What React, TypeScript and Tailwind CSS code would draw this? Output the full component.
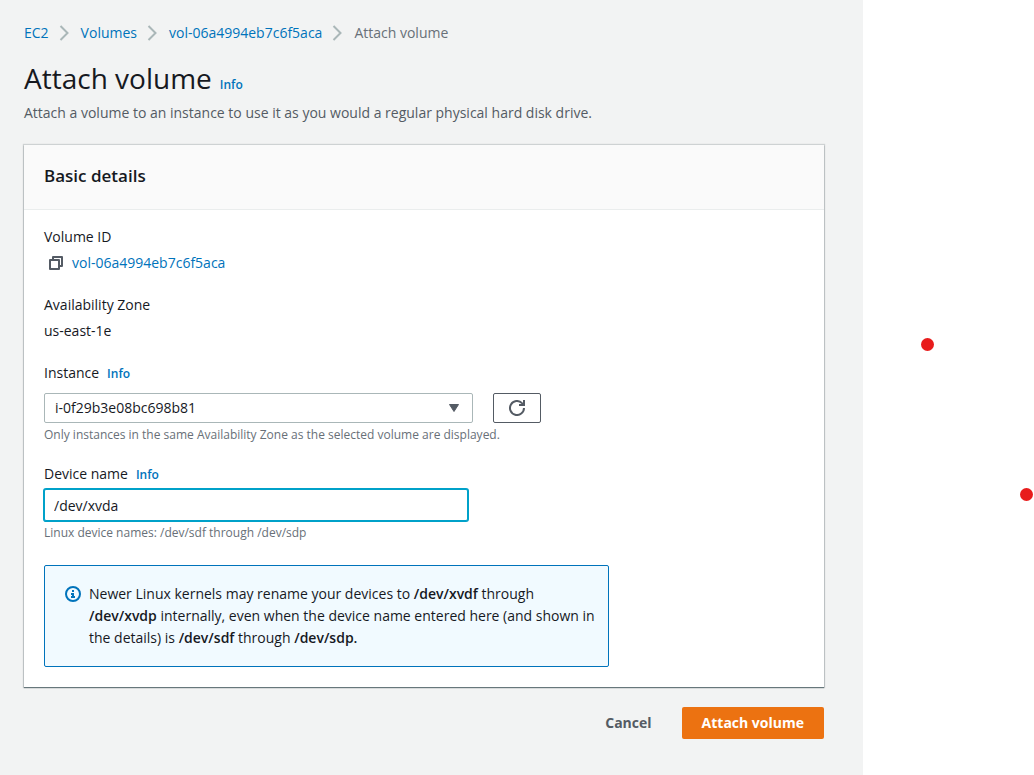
import { Fragment, type ReactNode } from "react";

const crumbs = ["EC2", "Volumes", "vol-06a4994eb7c6f5aca"];

function InfoLink() {
  return (
    <a href="#info" className="text-xs font-semibold text-[#0073bb]">
      Info
    </a>
  );
}

function Chevron() {
  return (
    <svg viewBox="0 0 16 16" className="mx-2 size-4 shrink-0" fill="none" stroke="#aab7b8" strokeWidth="2" aria-hidden="true">
      <path d="M3.500 1l7 7-7 7" />
    </svg>
  );
}

function CopyIcon() {
  return (
    <svg viewBox="0 0 16 16" className="size-4" fill="none" stroke="#545b64" strokeWidth="2" strokeLinejoin="round" aria-hidden="true">
      <path d="M2 5h9v9H2z" />
      <path d="M5 5V2h9v9h-3" />
    </svg>
  );
}

function RefreshIcon() {
  return (
    <svg viewBox="0 0 16 16" className="size-4" fill="none" stroke="#545b64" strokeWidth="2" aria-hidden="true">
      <path d="M15 8a7 7 0 1 1-2-4.900l2 1.900" />
      <path d="M15 0v5h-5" />
      <path d="M11.500 5.500L15 2v3.500z" fill="#545b64" stroke="none" />
    </svg>
  );
}

function InfoIcon() {
  return (
    <svg viewBox="0 0 16 16" className="mt-[3px] size-4 shrink-0" fill="none" stroke="#0073bb" strokeWidth="2" aria-hidden="true">
      <circle cx="8" cy="8" r="7" />
      <path d="M8 11V8H6M6 11h4M8 4v2" />
    </svg>
  );
}

function Hint({ id, children }: { id: string; children: ReactNode }) {
  return (
    <p id={id} className="mt-[3px] text-xs leading-[18px] text-[#687078]">
      {children}
    </p>
  );
}

export default function App() {
  return (
    <div className="flex min-h-screen bg-white font-['Open_Sans','Noto_Sans',sans-serif] text-sm leading-[22px] text-[#16191f]">
      <main className="min-w-0 flex-1 bg-[#f2f3f3] pt-[22px] pr-[39px] pb-9 pl-6">
        <nav aria-label="Breadcrumb" className="flex items-center">
          {crumbs.map((crumb) => (
            <Fragment key={crumb}>
              <a href="#crumb" className="text-[#0073bb]">{crumb}</a>
              <Chevron />
            </Fragment>
          ))}
          <span aria-current="page" className="text-[#687078]">Attach volume</span>
        </nav>

        <header className="mt-4">
          <div className="flex items-baseline gap-2">
            <h1 className="text-[28px] leading-9">Attach volume</h1>
            <InfoLink />
          </div>
          <p className="mt-[6px] text-[#545b64]">
            Attach a volume to an instance to use it as you would a regular physical hard disk drive.
          </p>
        </header>

        <section className="mt-[21px] bg-white shadow-[0_1px_1px_0_rgba(0,28,36,0.5),0_0_1px_1px_rgba(0,28,36,0.15)]">
          <div className="border-b border-[#eaeded] bg-[#fafafa] px-5 pt-[19px] pb-[21px]">
            <h2 className="text-[17px] leading-6 font-semibold">Basic details</h2>
          </div>
          <div className="px-5 pt-4 pb-5">
            <dl>
              <dt>Volume ID</dt>
              <dd className="mt-1 flex items-center">
                <button type="button" aria-label="Copy volume ID" className="mr-2 ml-1">
                  <CopyIcon />
                </button>
                <a href="#volume" className="text-[#0073bb]">vol-06a4994eb7c6f5aca</a>
              </dd>
              <dt className="mt-5">Availability Zone</dt>
              <dd className="mt-1">us-east-1e</dd>
            </dl>

            <div className="mt-5">
              <div className="flex items-baseline gap-2">
                <label htmlFor="instance">Instance</label>
                <InfoLink />
              </div>
              <div className="mt-[9px] flex gap-5">
                <div className="relative w-[429px]">
                  <select
                    id="instance"
                    aria-describedby="instance-hint"
                    className="h-[30px] w-full appearance-none rounded-[2px] border border-[#aab7b8] bg-white pr-10 pl-[10px]"
                  >
                    <option>i-0f29b3e08bc698b81</option>
                  </select>
                  <svg viewBox="0 0 12 10" className="pointer-events-none absolute top-[10px] right-[13px] h-[10px] w-3" aria-hidden="true">
                    <path d="M1.500 1.500h9L6 8.500z" fill="#545b64" stroke="#545b64" strokeLinejoin="round" />
                  </svg>
                </div>
                <button
                  type="button"
                  aria-label="Refresh instances"
                  className="flex h-[30px] w-12 items-center justify-center rounded-[2px] border border-[#545b64] bg-white"
                >
                  <RefreshIcon />
                </button>
              </div>
              <Hint id="instance-hint">
                Only instances in the same Availability Zone as the selected volume are displayed.
              </Hint>
            </div>

            <div className="mt-[19px]">
              <div className="flex items-baseline gap-2">
                <label htmlFor="device">Device name</label>
                <InfoLink />
              </div>
              <input
                id="device"
                type="text"
                defaultValue="/dev/xvda"
                aria-describedby="device-hint"
                className="mt-1 block h-8 w-[424px] rounded-[2px] border border-[#00a1c9] bg-white px-[9px] shadow-[0_0_0_1px_#00a1c9] outline-none"
              />
              <Hint id="device-hint">Linux device names: /dev/sdf through /dev/sdp</Hint>
            </div>

            <div className="mt-[23px] flex w-[565px] max-w-full gap-2 rounded-[2px] border border-[#0073bb] bg-[#f1faff] py-[17px] pr-1 pl-5">
              <InfoIcon />
              <p>
                Newer Linux kernels may rename your devices to <b className="font-semibold">/dev/xvdf</b> through
                <br />
                <b className="font-semibold">/dev/xvdp</b> internally, even when the device name entered here (and shown in
                <br />
                the details) is <b className="font-semibold">/dev/sdf</b> through <b className="font-semibold">/dev/sdp.</b>
              </p>
            </div>
          </div>
        </section>

        <div className="mt-5 flex justify-end gap-[10px] font-bold">
          <button type="button" className="h-8 px-5 text-[#545b64]">Cancel</button>
          <button type="button" className="h-8 rounded-[2px] bg-[#ec7211] px-5 text-white">Attach volume</button>
        </div>
      </main>

      <aside className="relative w-[171px] shrink-0">
        <span className="absolute top-[338px] left-[58px] size-[13px] rounded-full bg-[#e81c1c]" />
        <span className="absolute top-[488px] left-[157px] size-[13px] rounded-full bg-[#e81c1c]" />
      </aside>
    </div>
  );
}
